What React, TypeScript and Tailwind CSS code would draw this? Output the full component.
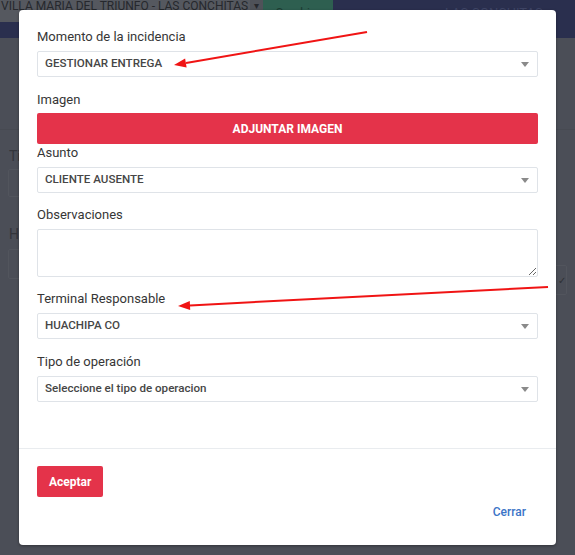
import { ReactNode } from "react";

const Label = ({ children, className = "" }: { children: ReactNode; className?: string }) => (
  <div className={`h-[18px] leading-[18px] text-[13px] text-[#363636] ${className}`}>{children}</div>
);

const SelectBox = ({ value, className = "" }: { value: string; className?: string }) => (
  <div
    className={`h-[26px] border border-[#dfe3e8] rounded-[2px] bg-white flex items-center justify-between pl-[7px] pr-[8px] ${className}`}
  >
    <span className="text-[11.6px] font-medium text-[#464646]">{value}</span>
    <svg width="8" height="5" viewBox="0 0 8 5">
      <path d="M0 0 L8 0 L4 5 Z" fill="#8a8a8a" />
    </svg>
  </div>
);

const App = () => {
  return (
    <div className="relative w-[575px] h-[555px] overflow-hidden bg-[#4b4e57] font-['Roboto','Liberation_Sans',sans-serif]">
      {/* page behind the dialog, dimmed */}
      <div className="flex h-[22px]">
        <div className="w-[250px] bg-[#55585f] pl-[1px]">
          <span className="block text-[12px] leading-[12px] text-[#26282d] whitespace-nowrap">
            VILLA MARIA DEL TRIUNFO - LAS CONCHITAS
          </span>
        </div>
        <div className="w-[13px] bg-[#4f5259] text-center text-[10px] leading-[12px] text-[#26282d]">▾</div>
        <div className="w-[70px] bg-[#2e5f50] text-center">
          <span className="text-[12px] leading-[12px] text-[#1d3b32]">Cambiar</span>
        </div>
        <div className="flex-1 bg-[#2a2f4e] pl-[112px]">
          <span className="text-[13px] leading-[12px] text-[#3f4566]">LAS CONCHITAS</span>
        </div>
      </div>
      <div className="h-[16px] bg-[#2a2f4e]" />
      <div className="border-b border-[#474a52] h-[92px]" />
      <div className="pl-[9px] pt-[17px]">
        <div className="text-[14px] text-[#33353b] leading-[18px]">Ti</div>
        <div className="mt-[4px] h-[28px] w-[200px] -ml-[1px] border border-[#52555d] rounded-[2px]" />
        <div className="mt-[28px] text-[14px] text-[#33353b] leading-[18px]">H</div>
        <div className="mt-[6px] h-[30px] w-[200px] -ml-[1px] border border-[#52555d] rounded-[2px]" />
      </div>
      <div className="absolute left-[553px] top-[265px] w-[14px] h-[30px] border border-[#52555d] rounded-[2px] flex items-center justify-end text-[10px] text-[#2e3035]">
        ✓
      </div>

      {/* dialog */}
      <div className="absolute left-[19px] top-[10px] w-[537px] bg-white rounded-[4px] shadow-[0_1px_3px_rgba(0,0,0,0.35)]">
        <div className="px-[18px] pt-[18px] pb-[46px]">
          <Label>Momento de la incidencia</Label>
          <SelectBox value="GESTIONAR ENTREGA" className="mt-[5px]" />

          <Label className="mt-[14px]">Imagen</Label>
          <button className="mt-[4px] w-full h-[31px] bg-[#e4334a] rounded-[2px] text-white text-[12px] font-bold flex items-center justify-center">
            ADJUNTAR IMAGEN
          </button>

          <Label>Asunto</Label>
          <SelectBox value="CLIENTE AUSENTE" className="mt-[5px]" />

          <Label className="mt-[13px]">Observaciones</Label>
          <textarea className="block mt-[5px] w-full h-[48px] border border-[#dfe3e8] rounded-[2px] outline-none" />

          <Label className="mt-[13px]">Terminal Responsable</Label>
          <SelectBox value="HUACHIPA CO" className="mt-[5px]" />

          <Label className="mt-[14px]">Tipo de operación</Label>
          <SelectBox value="Seleccione el tipo de operacion" className="mt-[5px]" />
        </div>

        <div className="border-t border-[#e9ecef] pt-[17px] pb-[25px] px-[18px]">
          <button className="h-[31px] px-[12px] bg-[#e4334a] rounded-[2px] text-white text-[12px] font-bold">
            Aceptar
          </button>
          <div className="mt-[7px] flex justify-end pr-[12px]">
            <span className="text-[12px] leading-[16px] font-medium text-[#3b74c7]">Cerrar</span>
          </div>
        </div>
      </div>

      {/* red annotation arrows */}
      <svg className="absolute inset-0 pointer-events-none" width="575" height="555" viewBox="0 0 575 555">
        <line x1="367" y1="32" x2="186" y2="63" stroke="#f01414" strokeWidth="2" />
        <polygon points="174,65 186.6,67.4 185.1,58.6" fill="#f01414" />
        <line x1="548" y1="287" x2="190" y2="305.4" stroke="#f01414" strokeWidth="2" />
        <polygon points="178,306 190.2,309.9 189.8,300.9" fill="#f01414" />
      </svg>
    </div>
  );
};

export default App;
